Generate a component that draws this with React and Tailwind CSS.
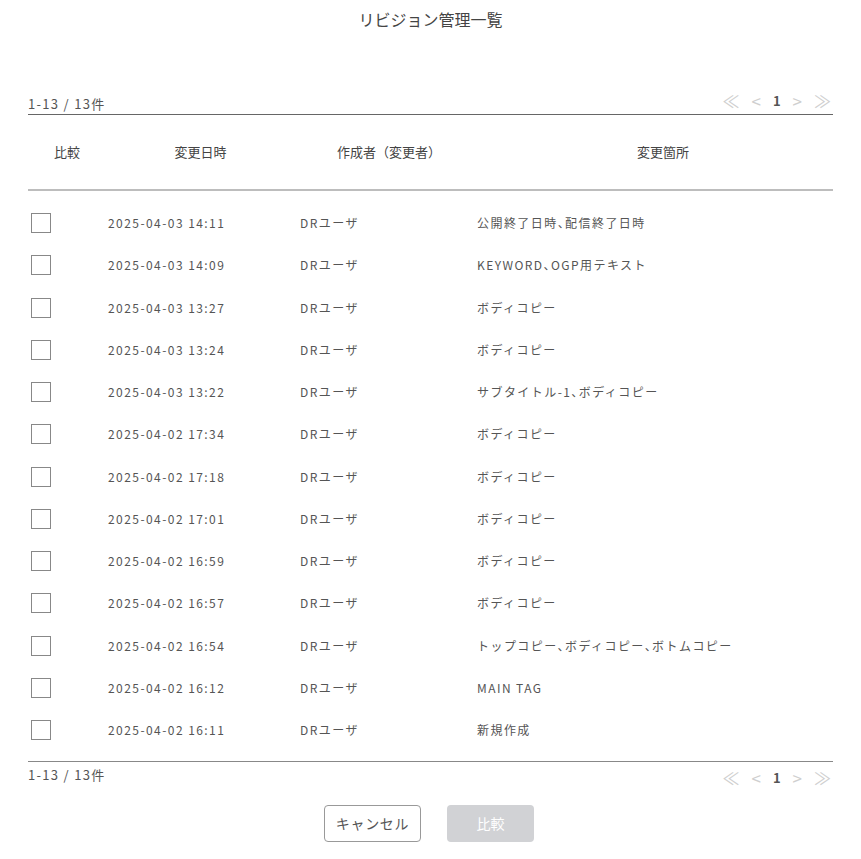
import React from "react";

const rows = [
  ["2025-04-03 14:11", "公開終了日時、配信終了日時"],
  ["2025-04-03 14:09", "KEYWORD、OGP用テキスト"],
  ["2025-04-03 13:27", "ボディコピー"],
  ["2025-04-03 13:24", "ボディコピー"],
  ["2025-04-03 13:22", "サブタイトル-1、ボディコピー"],
  ["2025-04-02 17:34", "ボディコピー"],
  ["2025-04-02 17:18", "ボディコピー"],
  ["2025-04-02 17:01", "ボディコピー"],
  ["2025-04-02 16:59", "ボディコピー"],
  ["2025-04-02 16:57", "ボディコピー"],
  ["2025-04-02 16:54", "トップコピー、ボディコピー、ボトムコピー"],
  ["2025-04-02 16:12", "MAIN TAG"],
  ["2025-04-02 16:11", "新規作成"],
];

const font = { fontFamily: '"Noto Sans CJK JP", "Noto Sans", sans-serif' };

function Pager() {
  return (
    <div className="flex items-center gap-[12px] pr-[2px] text-[17px] leading-none text-[#cfcfcf]">
      <span>≪</span>
      <span>&lt;</span>
      <span className="text-[13px] font-bold text-[#555]">1</span>
      <span>&gt;</span>
      <span>≫</span>
    </div>
  );
}

export default function App() {
  return (
    <div className="w-[861px] h-[859px] bg-white text-[#555]" style={font}>
      <h1 className="pt-[8px] text-center text-[16px] leading-[22px] text-[#444]">リビジョン管理一覧</h1>
      <div className="mx-[28px] mt-[62px]">
        <div className="flex items-end justify-between border-b border-[#666] pb-[1px]">
          <span className="text-[13px] leading-[18px] tracking-[0.1em]">1-13 / 13件</span>
          <div className="pb-[4px]"><Pager /></div>
        </div>
        <div className="grid grid-cols-[78px_188px_183px_1fr] h-[76px] items-center border-b-2 border-[#bdbdbd] text-[13px] text-[#444]">
          <div className="text-center">比較</div>
          <div className="text-center pl-[1px]">変更日時</div>
          <div className="text-center pl-[7px]">作成者（変更者）</div>
          <div className="text-center pl-[16px]">変更箇所</div>
        </div>
        <div className="pt-[11px]">
          {rows.map(([d, c], i) => (
            <div key={i} className="grid grid-cols-[78px_188px_183px_1fr] h-[42.25px] items-center text-[12px] tracking-[0.12em] text-[#555]">
              <div className="pl-[3px]">
                <div className="w-[20px] h-[20px] border-[1.5px] border-[#888] bg-white" />
              </div>
              <div className="pl-[2px]">{d}</div>
              <div className="pl-[6px]">DRユーザ</div>
              <div className="[font-feature-settings:'halt']">{c}</div>
            </div>
          ))}
        </div>
        <div className="mt-[10px] flex items-start justify-between border-t border-[#888] pt-[4px]">
          <span className="text-[13px] leading-[18px] tracking-[0.1em]">1-13 / 13件</span>
          <div className="pt-[3px]"><Pager /></div>
        </div>
        <div className="mt-[19px] flex justify-center gap-[26px] pr-[3px]">
          <button className="w-[97px] h-[37px] rounded-[4px] border border-[#999] bg-white text-[14px] tracking-[0.05em] text-[#555]">キャンセル</button>
          <button className="w-[87px] h-[37px] rounded-[4px] bg-[#d1d2d5] text-[14px] text-white">比較</button>
        </div>
      </div>
    </div>
  );
}
